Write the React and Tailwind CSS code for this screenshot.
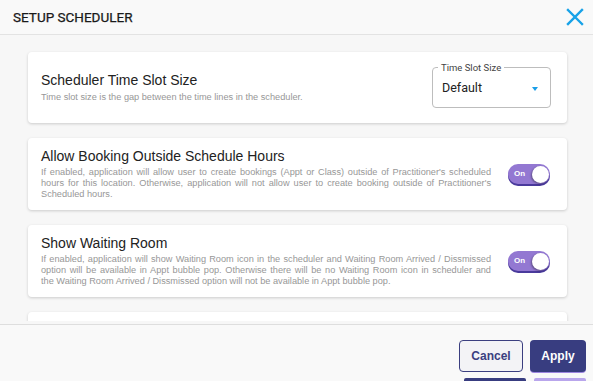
import React from "react";

const sans = { fontFamily: '"Liberation Sans", Arial, sans-serif' };
const roboto = { fontFamily: 'Roboto, "Liberation Sans", Arial, sans-serif' };

function Toggle() {
  return (
    <div className="relative w-[42px] h-[20px] rounded-full bg-[#9378d2] shadow-[0_2px_0_#4a3a9c] flex items-center" style={sans}>
      <span className="ml-[6px] text-[8px] font-bold text-white leading-none">On</span>
      <span className="absolute right-[1px] top-[1.5px] w-[17px] h-[17px] rounded-full bg-white shadow-[-1px_1px_2px_rgba(0,0,0,0.35)]" />
    </div>
  );
}

function Desc({ lines }) {
  return (
    <div className="w-[450px] text-[9.2px] leading-[11px] text-[#979797]" style={sans}>
      {lines.map((l, i) => (
        <div
          key={i}
          className={i < lines.length - 1 ? "text-justify [text-align-last:justify]" : ""}
        >
          {l}
        </div>
      ))}
    </div>
  );
}

function ToggleCard({ title, lines }) {
  return (
    <div className="flex-none h-[72px] bg-white rounded-[4px] shadow-[0_1px_3px_rgba(0,0,0,0.18)] flex items-center justify-between pl-[13px] pr-[17px]">
      <div className="self-start pt-[10px]">
        <div className="text-[14px] leading-[17px] text-[#222] mb-[2px]" style={sans}>{title}</div>
        <Desc lines={lines} />
      </div>
      <Toggle />
    </div>
  );
}

export default function App() {
  return (
    <div className="w-[593px] h-[381px] bg-[#f7f7f7] flex flex-col overflow-hidden">
      {/* header */}
      <div className="flex-none h-[35px] border-b border-[#e3e3e3] bg-[#f9f9f9] flex items-center justify-between pl-[13px] pr-[9px]">
        <div className="text-[13.5px] font-normal text-[#1a1a1a] [-webkit-text-stroke:0.25px_#1a1a1a]" style={roboto}>SETUP SCHEDULER</div>
        <svg width="18" height="18" viewBox="0 0 18 18">
          <path d="M2 2 L16 16 M16 2 L2 16" stroke="#17a2e8" strokeWidth="2.4" strokeLinecap="square" fill="none" />
        </svg>
      </div>

      {/* body */}
      <div className="flex-none h-[286px] overflow-hidden">
        <div className="flex flex-col gap-[15px] pt-[17px] pl-[28px] pr-[26px]">
          <div className="flex-none h-[71px] bg-white rounded-[4px] shadow-[0_1px_3px_rgba(0,0,0,0.18)] flex items-center justify-between pl-[13px] pr-[16px]">
            <div className="pb-[1px]">
              <div className="text-[14px] leading-[17px] text-[#222] mb-[3px]" style={sans}>Scheduler Time Slot Size</div>
              <div className="text-[9.2px] leading-[11px] text-[#979797]" style={sans}>
                Time slot size is the gap between the time lines in the scheduler.
              </div>
            </div>
            <div className="relative w-[119px] h-[41px] border border-[#bdbdbd] rounded-[4px] flex items-center justify-between pl-[9px] pr-[12px]" style={roboto}>
              <span className="absolute -top-[6px] left-[5px] bg-white px-[3px] text-[9.5px] leading-[11px] text-[#444]">Time Slot Size</span>
              <span className="text-[12.5px] text-[#222] mt-[1px]">Default</span>
              <svg width="6" height="4" viewBox="0 0 6 4" className="mt-[3px]">
                <path d="M0 0 L6 0 L3 4 Z" fill="#1a9ee8" />
              </svg>
            </div>
          </div>

          <ToggleCard
            title="Allow Booking Outside Schedule Hours"
            lines={[
              "If enabled, application will allow user to create bookings (Appt or Class) outside of Practitioner's scheduled",
              "hours for this location. Otherwise, application will not allow user to create booking outside of Practitioner's",
              "Scheduled hours.",
            ]}
          />
          <ToggleCard
            title="Show Waiting Room"
            lines={[
              "If enabled, application will show Waiting Room icon in the scheduler and Waiting Room Arrived / Dissmissed",
              "option will be available in Appt bubble pop. Otherwise there will be no Waiting Room icon in scheduler and",
              "the Waiting Room Arrived / Dissmissed option will not be available in Appt bubble pop.",
            ]}
          />
          <div className="flex-none h-[72px] bg-white rounded-[4px] shadow-[0_1px_3px_rgba(0,0,0,0.18)]" />
        </div>
      </div>
      <div className="flex-none h-[3px]" />

      {/* footer */}
      <div className="flex-1 border-t border-[#dedede] bg-[#f9f9f9] flex flex-col items-end pr-[7px] pt-[15px]">
        <div className="flex gap-[7px]" style={sans}>
          <button className="w-[64px] h-[32px] rounded-[4px] border-[1.5px] border-[#3b3f80] bg-[#f3f3f6] text-[12px] font-bold text-[#3b3f80]">
            Cancel
          </button>
          <button className="w-[56px] h-[32px] rounded-[4px] bg-[#383d80] shadow-[0_1px_0_#9d86e0] text-[12px] font-bold text-white">
            Apply
          </button>
        </div>
        <div className="flex gap-[8px] mt-[6px]">
          <div className="w-[62px] h-[4px] bg-[#383d80] rounded-t-[2px]" />
          <div className="w-[52px] h-[4px] bg-[#b9a6ec] rounded-t-[2px]" />
        </div>
      </div>
    </div>
  );
}
